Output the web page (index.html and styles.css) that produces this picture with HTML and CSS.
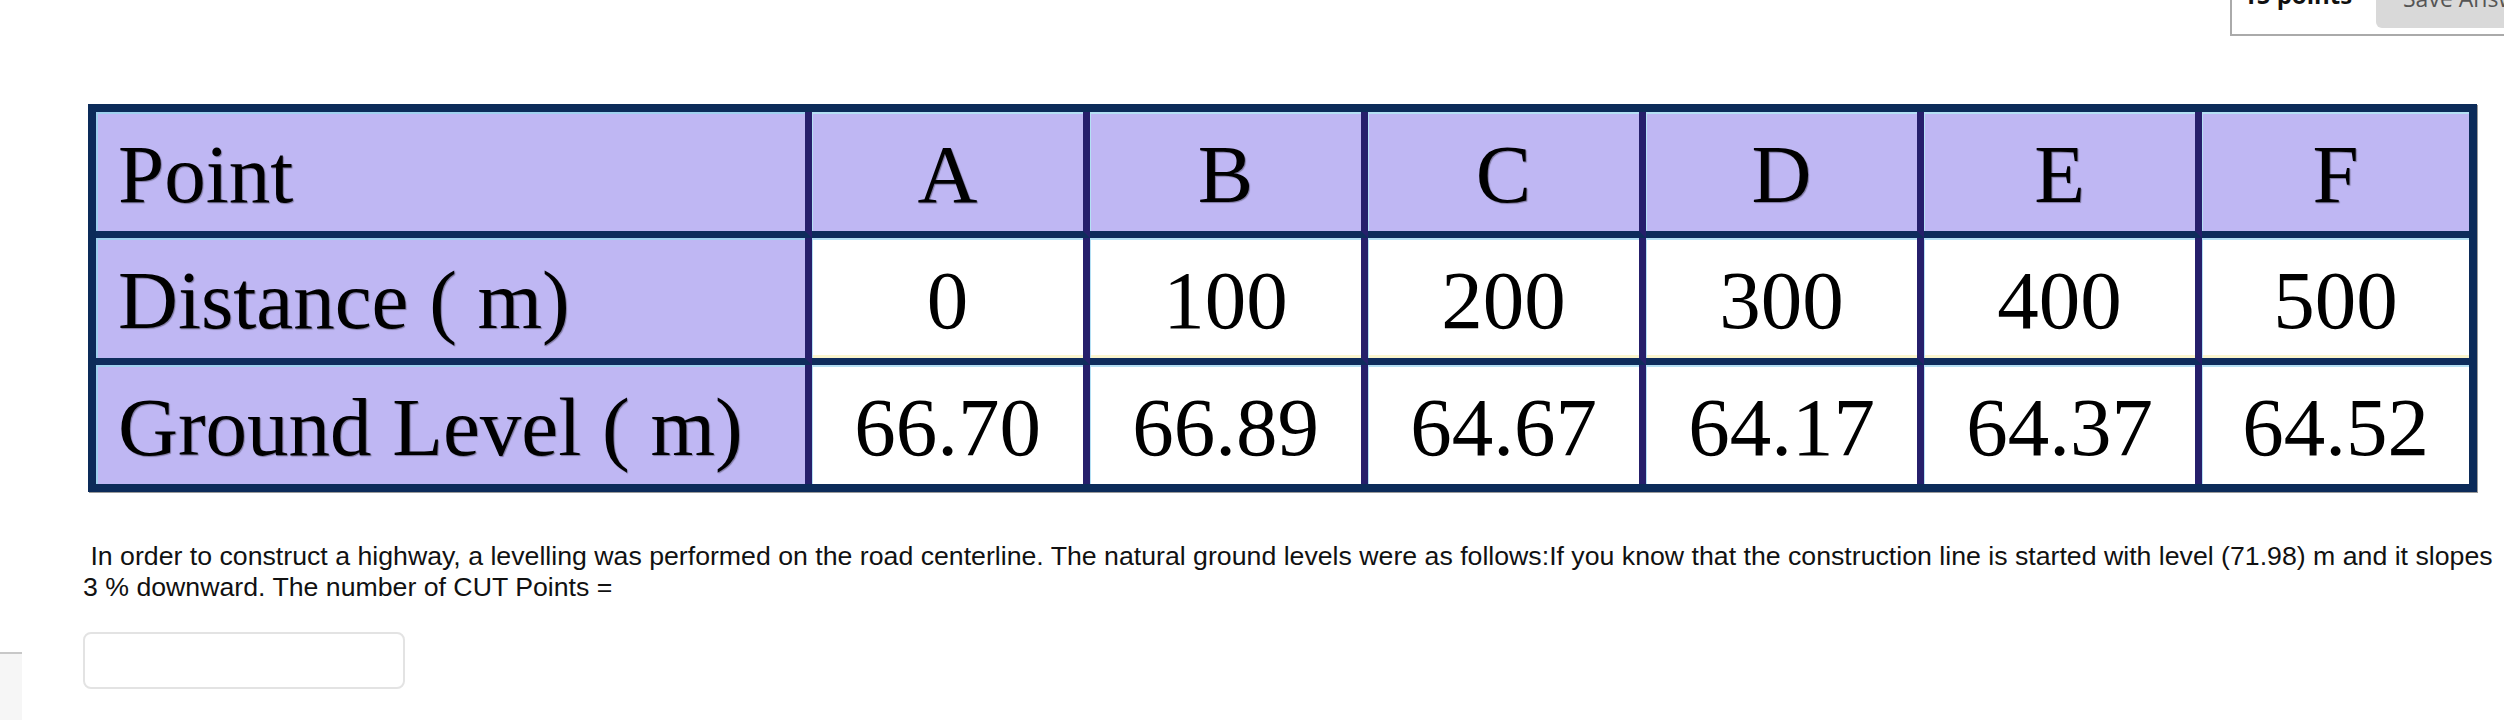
FILE: index.html
```html
<!DOCTYPE html>
<html lang="en">
<head>
<meta charset="utf-8">
<title>Levelling question</title>
<link rel="stylesheet" href="styles.css">
</head>
<body>
<header class="topbar">
  <div class="points-box">
    <span class="points">15 points</span>
    <button class="save-btn" type="button">Save Answer</button>
  </div>
</header>
<main class="question">
  <table class="levels">
    <colgroup>
      <col class="c-label">
      <col class="c-mid"><col class="c-mid"><col class="c-mid"><col class="c-mid"><col class="c-mid">
      <col class="c-last">
    </colgroup>
    <tr class="row-head">
      <td class="label">Point</td><td>A</td><td>B</td><td>C</td><td>D</td><td>E</td><td>F</td>
    </tr>
    <tr class="row-dist">
      <td class="label">Distance ( m)</td><td>0</td><td>100</td><td>200</td><td>300</td><td>400</td><td>500</td>
    </tr>
    <tr class="row-ground">
      <td class="label">Ground Level ( m)</td><td>66.70</td><td>66.89</td><td>64.67</td><td>64.17</td><td>64.37</td><td>64.52</td>
    </tr>
  </table>
  <p class="prompt">&nbsp;In order to construct a highway, a levelling was performed on the road centerline. The natural ground levels were as follows:If you know that the construction line is started with level (71.98) m and it slopes 3 % downward. The number of CUT Points =</p>
</main>
<div class="answer-row">
  <aside class="side-stub"></aside>
  <input class="answer" type="text" aria-label="Answer">
</div>
</body>
</html>
```

FILE: styles.css
```css
html, body {
  margin: 0;
  background: #ffffff;
}
body {
  width: 2504px;
  overflow: hidden;
  font-family: "Liberation Sans", Arial, sans-serif;
  color: #111111;
}

/* top-right score / save bar (page scrolled, partly above viewport) */
.topbar {
  display: flex;
  justify-content: flex-end;
  height: 36px;
}
.points-box {
  width: 274px;
  height: 36px;
  box-sizing: border-box;
  border-left: 2px solid #aaaaaa;
  border-bottom: 2px solid #aaaaaa;
  display: flex;
  align-items: flex-start;
  padding-left: 11px;
  overflow: hidden;
}
.points {
  flex: none;
  width: 133px;
  margin-top: -20px;
  font-family: "Open Sans", sans-serif;
  font-weight: 700;
  font-size: 24px;
  line-height: 30px;
  color: #111111;
}
.save-btn {
  flex: none;
  margin-top: -28px;
  height: 56px;
  padding: 0 27px 5px;
  border: 0;
  border-radius: 6px;
  background: #d9d9d9;
  font-family: "Open Sans", sans-serif;
  font-size: 23px;
  color: #555555;
}

/* question body */
.question {
  padding: 68px 4px 0 83px;
}
.levels {
  margin-left: 5px;
  width: 2389px;
  box-sizing: border-box;
  table-layout: fixed;
  border-collapse: separate;
  border-spacing: 0;
  border: 8px solid #0c2b59;
  box-shadow: 1px 1px 0 #9a9a9a;
  font-family: "Liberation Serif", "Times New Roman", serif;
  font-size: 83px;
  color: #000000;
}
.c-label { width: 716px; }
.c-mid { width: 278px; }
.c-last { width: 267px; }

.levels td {
  box-sizing: content-box;
  height: 115px;
  padding: 4px 0 0;
  text-align: center;
  vertical-align: middle;
  white-space: nowrap;
  background: #ffffff;
  border-right: 7px solid #261f6b;
  border-bottom: 7px solid #0e2c5c;
  box-shadow: inset 1px 2px 0 #b4e0f4;
}
.levels td:last-child { border-right: 0; }
.levels tr:last-child td { border-bottom: 0; }
.row-dist td { height: 116px; box-shadow: inset 1px 2px 0 #b4e0f4, inset 0 -3px 0 #fbf5cd; }

.levels .label,
.row-head td {
  background: #bfb7f3;
  text-shadow: 1px 1px 1px rgba(0, 0, 0, 0.35);
}
.levels .label {
  text-align: left;
  padding-left: 22px;
  box-shadow: inset 2px 2px 0 #9fd0ee;
}

.prompt {
  margin: 49px 0 0;
  font-size: 26.7px;
  line-height: 31px;
  color: #111111;
}

/* answer field row */
.answer-row {
  display: flex;
  align-items: flex-start;
  margin-top: 29px;
}
.side-stub {
  flex: none;
  width: 22px;
  height: 80px;
  margin-top: 20px;
  border-top: 2px solid #c8c8c8;
  background: #f6f6f6;
}
.answer {
  flex: none;
  margin: 0 0 0 61px;
  width: 322px;
  height: 57px;
  box-sizing: border-box;
  border: 2px solid #e3e3e3;
  border-radius: 8px;
  background: #ffffff;
}
```
